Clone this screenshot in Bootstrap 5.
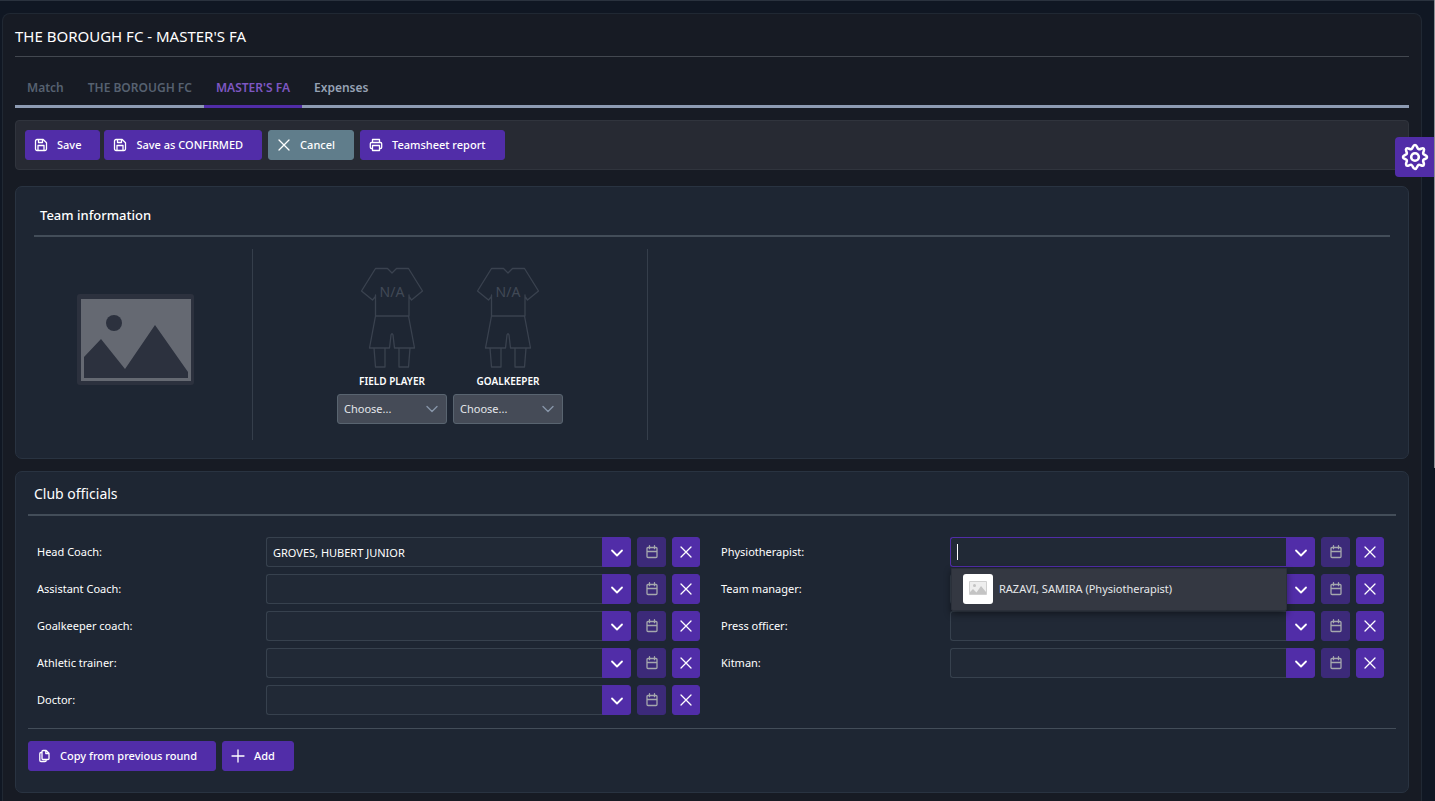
<!DOCTYPE html>
<html lang="en" data-bs-theme="dark">
<head>
<meta charset="utf-8">
<meta name="viewport" content="width=device-width, initial-scale=1">
<title>THE BOROUGH FC - MASTER'S FA</title>
<link href="https://cdn.jsdelivr.net/npm/bootstrap@5.3.0/dist/css/bootstrap.min.css" rel="stylesheet">
<style>
:root{--purple:#512da8;--line:#434d59;--edge:#293341}
body{background:#101723;color:#fff;font:11px/18px "Noto Sans","Open Sans",sans-serif;border-top:1px solid #2a323e}
.page-card{margin:12px 13px 0 2px;padding:0 12px 7px;background:#171b24;border:1px solid #202833;border-bottom:0;border-radius:8px 8px 0 0;min-height:calc(100vh - 13px)}
.page-title{font-size:15px;line-height:20px;font-weight:400;margin:0;padding:12px 0 10px;border-bottom:1px solid #434850}
.match-tabs{margin-top:14px;border-bottom:3px solid #8d9bb3;flex-wrap:nowrap}
.match-tabs .nav-link{border:0;border-bottom:3px solid transparent;border-radius:0;margin-bottom:-3px;padding:8px 12px 8px;color:#96a2b4;font-weight:600;line-height:18px;font-size:12px}
.match-tabs .nav-link.dim{color:#566170}
.match-tabs .nav-link.active{background:none;color:#7e57c2;border-color:var(--purple)}
.tool-box{margin-top:12px;padding:9px;gap:6px;background:#272a33;border:1px solid #30343d;border-radius:4px}
.btn-pair{gap:4px}
.btn{--bs-btn-font-size:11px;--bs-btn-line-height:18px;--bs-btn-border-radius:3px;--bs-btn-font-weight:500;--bs-btn-padding-y:5px;--bs-btn-color:#fff;--bs-btn-bg:var(--purple);--bs-btn-border-color:var(--purple);--bs-btn-hover-bg:#5e35b1;--bs-btn-hover-color:#fff;--bs-btn-disabled-color:#fff;--bs-btn-disabled-bg:var(--purple);--bs-btn-disabled-border-color:var(--purple);--bs-btn-disabled-opacity:.6}
.btn-text{display:inline-flex;align-items:center;gap:9px;padding:5px 18px 5px 8px;white-space:nowrap}
.btn-slate{--bs-btn-bg:#607d8b;--bs-btn-border-color:#607d8b}
.btn-icon{width:29px;height:30px;padding:0;display:inline-flex;align-items:center;justify-content:center;flex:none}
.btn-clear{width:28px}
.ico{width:14px;height:14px;fill:none;stroke:currentColor;stroke-width:1.3;stroke-linecap:round;stroke-linejoin:round;flex:none}
.panel{background:#1e2633;border:1px solid var(--edge);border-radius:7px}
.panel h2{font-size:13px;line-height:18px;font-weight:500;margin:0;padding:0 6px 11px;border-bottom:2px solid var(--line)}
.team-panel{margin-top:16px;padding:19px 18px 18px}
.club-panel{margin-top:12px;padding:13px 12px 21px}
.club-panel h2{font-size:14px;font-weight:400}
.team-cells{margin-top:12px;min-height:191px}
.cell-logo{flex:0 0 219px;padding:45px 16px 0 0;border-right:1px solid #353e4b}
.cell-kits{flex:0 0 395px;gap:6px;padding-top:18px;border-right:1px solid #353e4b}
.kit{width:110px}
.kit-name{font-size:10px;line-height:16px;font-weight:600;display:block;margin:4px 0 5px}
.kit .form-select{height:30px;padding:5px 24px 5px 6px;font-size:11px;line-height:18px;color:#e3e6ea;border:1px solid #596470;border-radius:3px;background-color:#454b57;background-position:right 7px center;background-size:14px 14px;background-image:url("data:image/svg+xml,%3csvg xmlns='http://www.w3.org/2000/svg' viewBox='0 0 14 14'%3e%3cpath fill='none' stroke='%238795a8' stroke-width='1.4' stroke-linecap='round' stroke-linejoin='round' d='M2 4.5l5 5 5-5'/%3e%3c/svg%3e")}
.officials{margin-top:21px;margin-bottom:13px}
.officials .form-line{display:flex;align-items:center;margin-bottom:7px}
.form-line label{flex:0 0 33.333%;padding-left:9px}
.form-line .controls{flex:1;display:flex;gap:6px;padding:0 12px 0 10px;position:relative}
.form-line .form-control{height:30px;padding:5px 6px;font-size:11px;line-height:18px;color:#fff;background:#212936;border:1px solid #37414e;border-right:0;border-radius:3px 0 0 3px}
.form-line .form-control.is-open{border-color:var(--purple)}
.input-group .btn-icon{border-radius:0 3px 3px 0}
.suggest{position:absolute;z-index:5;top:31px;left:11px;right:109px;padding:5px 11px 6px;background:#343842;border:1px solid #2b303a;box-shadow:0 3px 7px rgba(0,0,0,.45);list-style:none;margin:0;border-radius:0 0 2px 2px}
.suggest button{display:flex;align-items:center;gap:6px;width:100%;padding:0;border:0;background:none;color:#e6e8eb;text-align:left}
.caret-bar{position:absolute;z-index:6;left:17px;top:7px;width:1px;height:16px;background:#fff}
.club-foot{border-top:1px solid var(--line);padding-top:12px;gap:6px}
.settings-tab{position:absolute;z-index:10;top:137px;right:0;width:40px;height:40px;border-radius:4px 0 0 4px;background:var(--purple);border:0;color:#fff;padding:6px}
.scroll-mark{position:absolute;z-index:11;right:0;top:0;width:1px;height:468px;background:#8b8e93}
</style>
</head>
<body>
<svg class="d-none" aria-hidden="true">
  <symbol id="i-save" viewBox="0 0 14 14"><path d="M3 1.5h6.200L12.500 4.800V11a1.500 1.500 0 0 1-1.500 1.500H3A1.500 1.500 0 0 1 1.500 11V3A1.500 1.500 0 0 1 3 1.500zM4 12.500V7.500h6v5M4.500 1.700v2.800h4V1.700"/></symbol>
  <symbol id="i-x" viewBox="0 0 14 14"><path d="M2 2l10 10M12 2L2 12"/></symbol>
  <symbol id="i-print" viewBox="0 0 14 14"><path d="M3.500 4.500v-3h7v3M3.500 10.500H2.500a1.200 1.200 0 0 1-1.200-1.200V5.700a1.200 1.200 0 0 1 1.200-1.200h9a1.200 1.200 0 0 1 1.200 1.200v3.600a1.200 1.200 0 0 1-1.200 1.200h-1M3.500 7.500h7v5h-7z"/></symbol>
  <symbol id="i-down" viewBox="0 0 14 14"><path d="M2 5.500l5 5 5-5" stroke-width="1.800"/></symbol>
  <symbol id="i-cal" viewBox="0 0 14 14"><path d="M3 2.500h8a1 1 0 0 1 1 1v8a1 1 0 0 1-1 1H3a1 1 0 0 1-1-1v-8a1 1 0 0 1 1-1zM2 6.500h10M4.500.700v3M9.500.700v3"/></symbol>
  <symbol id="i-copy" viewBox="0 0 14 14"><path d="M6 1.500h3.200L12 4.200v5.300a1 1 0 0 1-1 1H6a1 1 0 0 1-1-1v-7a1 1 0 0 1 1-1zM8.800 1.700v2.800h3M4.800 3.500H4a1.200 1.200 0 0 0-1.200 1.200v6.600A1.200 1.200 0 0 0 4 12.500h4a1.200 1.200 0 0 0 1.200-1.200v-.6"/></symbol>
  <symbol id="i-plus" viewBox="0 0 14 14"><path d="M7 1v12M1 7h12"/></symbol>
  <symbol id="i-kit" viewBox="0 0 64 102"><path fill="none" stroke="#3a424f" stroke-width="1.300" stroke-linejoin="round" d="M15.500 1.500h12l4.500 4.500 4.500-4.500h12L62.500 24l-11 9-2.500-3.500v-1.500V49H15.500V28v1.500L12.500 33l-11-9zM15.500 49L9.500 81H29.500L31 68q1-2.500 2 0l1.500 13H54.500L48.500 49M14 81l1.500 19H25V81M50 81l-1.500 19H39V81"/></symbol>
</svg>

<main class="page-card">
  <h1 class="page-title">THE BOROUGH FC - MASTER'S FA</h1>
  <ul class="nav nav-tabs match-tabs">
    <li class="nav-item"><a class="nav-link dim" href="#">Match</a></li>
    <li class="nav-item"><a class="nav-link dim" href="#">THE BOROUGH FC</a></li>
    <li class="nav-item"><a class="nav-link active" aria-current="page" href="#">MASTER'S FA</a></li>
    <li class="nav-item"><a class="nav-link" href="#">Expenses</a></li>
  </ul>

  <div class="tool-box d-flex">
    <div class="btn-pair d-flex">
      <button type="button" class="btn btn-text"><svg class="ico"><use href="#i-save"/></svg>Save</button>
      <button type="button" class="btn btn-text"><svg class="ico"><use href="#i-save"/></svg>Save as CONFIRMED</button>
    </div>
    <button type="button" class="btn btn-text btn-slate"><svg class="ico"><use href="#i-x"/></svg>Cancel</button>
    <button type="button" class="btn btn-text"><svg class="ico"><use href="#i-print"/></svg>Teamsheet report</button>
  </div>

  <section class="panel team-panel">
    <h2>Team information</h2>
    <div class="team-cells d-flex">
      <div class="cell-logo text-center">
        <svg width="117" height="91" viewBox="0 0 117 91" role="img" aria-label="No logo"><rect width="117" height="91" rx="3" fill="#2c313e"/><path fill="#656972" d="M4 5h110v82H4z"/><circle cx="37" cy="29" r="8" fill="#2c313e"/><path fill="#2c313e" d="M7 63l17-18 24 30 30-44 33 47v6H7z"/></svg>
      </div>
      <div class="cell-kits d-flex justify-content-center">
        <div class="kit text-center">
          <svg class="d-block mx-auto" width="64" height="102" viewBox="0 0 64 102"><use href="#i-kit"/><text x="32" y="30" text-anchor="middle" font-size="14" fill="#414956">N/A</text></svg>
          <label class="kit-name" for="kitField">FIELD PLAYER</label>
          <select class="form-select" id="kitField"><option>Choose...</option></select>
        </div>
        <div class="kit text-center">
          <svg class="d-block mx-auto" width="64" height="102" viewBox="0 0 64 102"><use href="#i-kit"/><text x="32" y="30" text-anchor="middle" font-size="14" fill="#414956">N/A</text></svg>
          <label class="kit-name" for="kitKeeper">GOALKEEPER</label>
          <select class="form-select" id="kitKeeper"><option>Choose...</option></select>
        </div>
      </div>
    </div>
  </section>

  <section class="panel club-panel">
    <h2>Club officials</h2>
    <div class="row g-0 officials">
      <div class="col-6">
        <div class="form-line"><label for="o1">Head Coach:</label><div class="controls"><div class="input-group"><input class="form-control" id="o1" value="GROVES, HUBERT JUNIOR"><button type="button" class="btn btn-icon" aria-label="Show list"><svg class="ico"><use href="#i-down"/></svg></button></div><button type="button" class="btn btn-icon" disabled aria-label="Date"><svg class="ico"><use href="#i-cal"/></svg></button><button type="button" class="btn btn-icon btn-clear" aria-label="Clear"><svg class="ico"><use href="#i-x"/></svg></button></div></div>
        <div class="form-line"><label for="o2">Assistant Coach:</label><div class="controls"><div class="input-group"><input class="form-control" id="o2"><button type="button" class="btn btn-icon" aria-label="Show list"><svg class="ico"><use href="#i-down"/></svg></button></div><button type="button" class="btn btn-icon" disabled aria-label="Date"><svg class="ico"><use href="#i-cal"/></svg></button><button type="button" class="btn btn-icon btn-clear" aria-label="Clear"><svg class="ico"><use href="#i-x"/></svg></button></div></div>
        <div class="form-line"><label for="o3">Goalkeeper coach:</label><div class="controls"><div class="input-group"><input class="form-control" id="o3"><button type="button" class="btn btn-icon" aria-label="Show list"><svg class="ico"><use href="#i-down"/></svg></button></div><button type="button" class="btn btn-icon" disabled aria-label="Date"><svg class="ico"><use href="#i-cal"/></svg></button><button type="button" class="btn btn-icon btn-clear" aria-label="Clear"><svg class="ico"><use href="#i-x"/></svg></button></div></div>
        <div class="form-line"><label for="o4">Athletic trainer:</label><div class="controls"><div class="input-group"><input class="form-control" id="o4"><button type="button" class="btn btn-icon" aria-label="Show list"><svg class="ico"><use href="#i-down"/></svg></button></div><button type="button" class="btn btn-icon" disabled aria-label="Date"><svg class="ico"><use href="#i-cal"/></svg></button><button type="button" class="btn btn-icon btn-clear" aria-label="Clear"><svg class="ico"><use href="#i-x"/></svg></button></div></div>
        <div class="form-line mb-0"><label for="o5">Doctor:</label><div class="controls"><div class="input-group"><input class="form-control" id="o5"><button type="button" class="btn btn-icon" aria-label="Show list"><svg class="ico"><use href="#i-down"/></svg></button></div><button type="button" class="btn btn-icon" disabled aria-label="Date"><svg class="ico"><use href="#i-cal"/></svg></button><button type="button" class="btn btn-icon btn-clear" aria-label="Clear"><svg class="ico"><use href="#i-x"/></svg></button></div></div>
      </div>
      <div class="col-6">
        <div class="form-line"><label for="o6">Physiotherapist:</label><div class="controls"><div class="input-group"><input class="form-control is-open" id="o6"><button type="button" class="btn btn-icon" aria-label="Show list"><svg class="ico"><use href="#i-down"/></svg></button></div><button type="button" class="btn btn-icon" disabled aria-label="Date"><svg class="ico"><use href="#i-cal"/></svg></button><button type="button" class="btn btn-icon btn-clear" aria-label="Clear"><svg class="ico"><use href="#i-x"/></svg></button>
          <span class="caret-bar"></span>
          <ul class="suggest"><li><button type="button"><svg width="30" height="30" viewBox="0 0 30 30"><rect width="30" height="30" rx="3" fill="#fff"/><path fill="#eee" stroke="#d0d0d0" d="M6.500 7.500h17v13h-17z"/><circle cx="11.500" cy="11.500" r="1.500" fill="#c4c4c4"/><path fill="#c4c4c4" d="M7 18l3-3 3.500 3.500L18 12l5 6v2H7z"/></svg>RAZAVI, SAMIRA (Physiotherapist)</button></li></ul></div></div>
        <div class="form-line"><label for="o7">Team manager:</label><div class="controls"><div class="input-group"><input class="form-control" id="o7"><button type="button" class="btn btn-icon" aria-label="Show list"><svg class="ico"><use href="#i-down"/></svg></button></div><button type="button" class="btn btn-icon" disabled aria-label="Date"><svg class="ico"><use href="#i-cal"/></svg></button><button type="button" class="btn btn-icon btn-clear" aria-label="Clear"><svg class="ico"><use href="#i-x"/></svg></button></div></div>
        <div class="form-line"><label for="o8">Press officer:</label><div class="controls"><div class="input-group"><input class="form-control" id="o8"><button type="button" class="btn btn-icon" aria-label="Show list"><svg class="ico"><use href="#i-down"/></svg></button></div><button type="button" class="btn btn-icon" disabled aria-label="Date"><svg class="ico"><use href="#i-cal"/></svg></button><button type="button" class="btn btn-icon btn-clear" aria-label="Clear"><svg class="ico"><use href="#i-x"/></svg></button></div></div>
        <div class="form-line mb-0"><label for="o9">Kitman:</label><div class="controls"><div class="input-group"><input class="form-control" id="o9"><button type="button" class="btn btn-icon" aria-label="Show list"><svg class="ico"><use href="#i-down"/></svg></button></div><button type="button" class="btn btn-icon" disabled aria-label="Date"><svg class="ico"><use href="#i-cal"/></svg></button><button type="button" class="btn btn-icon btn-clear" aria-label="Clear"><svg class="ico"><use href="#i-x"/></svg></button></div></div>
      </div>
    </div>
    <div class="club-foot d-flex">
      <button type="button" class="btn btn-text"><svg class="ico"><use href="#i-copy"/></svg>Copy from previous round</button>
      <button type="button" class="btn btn-text"><svg class="ico"><use href="#i-plus"/></svg>Add</button>
    </div>
  </section>
</main>
<button type="button" class="settings-tab" aria-label="Settings"><svg class="d-block" width="28" height="28" viewBox="0 0 28 28" fill="none" stroke="currentColor" stroke-width="2.600" stroke-linejoin="round"><circle cx="14" cy="14" r="3.800"/><path d="M14 2c2.200 0 2 3.400 3.600 4.100s3.700-1.900 5.100-.5-1.100 3.600-.5 5.100S26 11.800 26 14s-3.100 1.800-3.800 3.300 1.900 3.700.5 5.100-3.600-1.100-5.100-.5S16.200 26 14 26s-2-3.500-3.600-4.100-3.700 1.900-5.100.5 1.100-3.600.5-5.100S2 16.200 2 14s3.200-1.800 3.800-3.300-1.900-3.700-.5-5.100 3.600 1.100 5.100.5S11.800 2 14 2z"/></svg></button>
<div class="scroll-mark"></div>
<script src="https://cdn.jsdelivr.net/npm/bootstrap@5.3.0/dist/js/bootstrap.bundle.min.js"></script>
</body>
</html>
